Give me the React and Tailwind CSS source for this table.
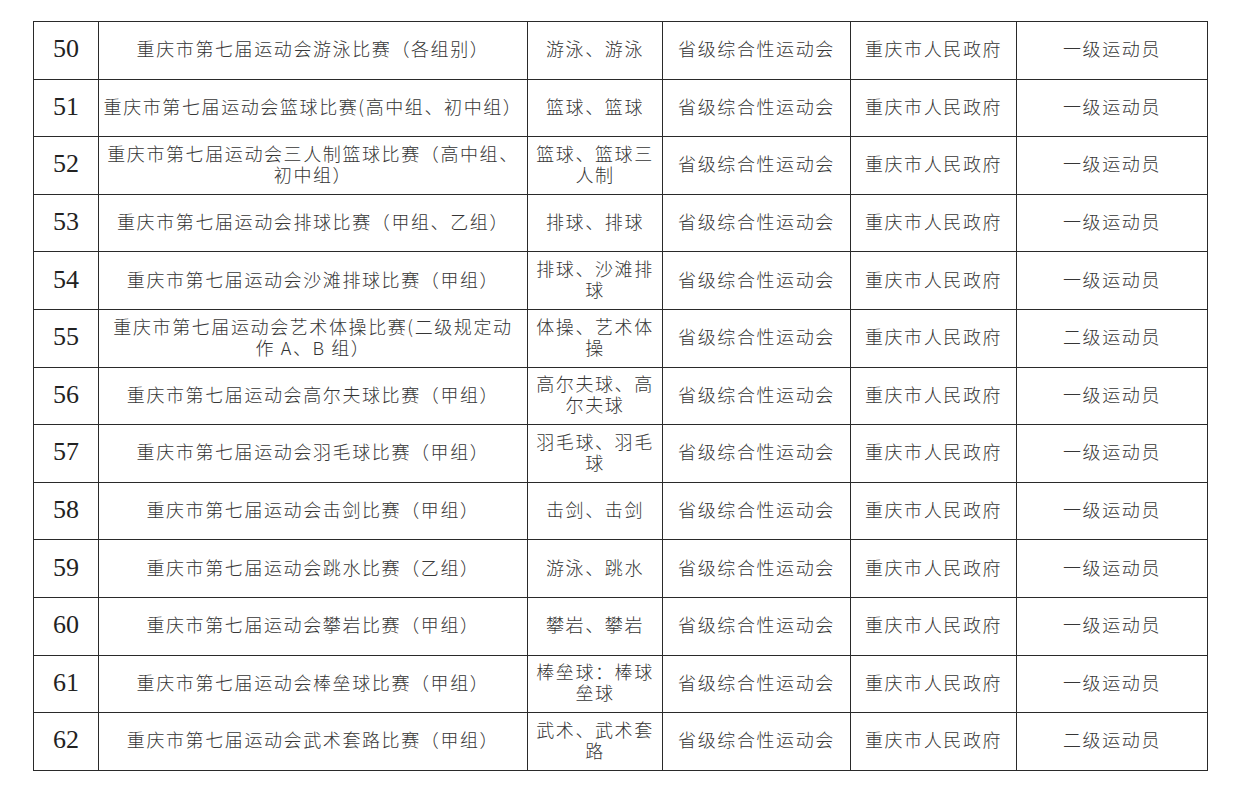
import React from "react";

const rows = [
  ["50", "重庆市第七届运动会游泳比赛（各组别）", "游泳、游泳", "一级运动员"],
  ["51", "重庆市第七届运动会篮球比赛(高中组、初中组）", "篮球、篮球", "一级运动员"],
  ["52", "重庆市第七届运动会三人制篮球比赛（高中组、\n初中组）", "篮球、篮球三\n人制", "一级运动员"],
  ["53", "重庆市第七届运动会排球比赛（甲组、乙组）", "排球、排球", "一级运动员"],
  ["54", "重庆市第七届运动会沙滩排球比赛（甲组）", "排球、沙滩排\n球", "一级运动员"],
  ["55", "重庆市第七届运动会艺术体操比赛(二级规定动\n作 A、B 组）", "体操、艺术体\n操", "二级运动员"],
  ["56", "重庆市第七届运动会高尔夫球比赛（甲组）", "高尔夫球、高\n尔夫球", "一级运动员"],
  ["57", "重庆市第七届运动会羽毛球比赛（甲组）", "羽毛球、羽毛\n球", "一级运动员"],
  ["58", "重庆市第七届运动会击剑比赛（甲组）", "击剑、击剑", "一级运动员"],
  ["59", "重庆市第七届运动会跳水比赛（乙组）", "游泳、跳水", "一级运动员"],
  ["60", "重庆市第七届运动会攀岩比赛（甲组）", "攀岩、攀岩", "一级运动员"],
  ["61", "重庆市第七届运动会棒垒球比赛（甲组）", "棒垒球：棒球\n垒球", "一级运动员"],
  ["62", "重庆市第七届运动会武术套路比赛（甲组）", "武术、武术套\n路", "二级运动员"],
];

const Lines = ({ text }) =>
  text.split("\n").map((t, i) => (
    <span key={i} className="block whitespace-nowrap">
      {t}
    </span>
  ));

const cell = "border border-[#2a2a2a] text-center align-middle px-0 pt-0 pb-[3px]";

export default function App() {
  return (
    <div className="min-h-[792px] w-[1233px] bg-white pt-[21px] pl-[33px]">
      <table
        className="table-fixed border-collapse text-[#363636] text-[18px] leading-[21px] tracking-[1.6px]"
        style={{ fontFamily: '"Noto Sans CJK SC", "Liberation Serif", serif', fontWeight: 300 }}
      >
        <colgroup>
          <col className="w-[65px]" />
          <col className="w-[429px]" />
          <col className="w-[135px]" />
          <col className="w-[188px]" />
          <col className="w-[166px]" />
          <col className="w-[191px]" />
        </colgroup>
        <tbody>
          {rows.map(([no, name, sport, level]) => (
            <tr key={no} className="h-[57.6px]">
              <td
                className={`${cell} text-[26px] text-[#222] tracking-normal`}
                style={{ fontFamily: '"Liberation Serif", serif', fontWeight: 400 }}
              >
                {no}
              </td>
              <td className={cell}>
                <Lines text={name} />
              </td>
              <td className={cell}>
                <Lines text={sport} />
              </td>
              <td className={cell}>省级综合性运动会</td>
              <td className={cell}>重庆市人民政府</td>
              <td className={cell}>{level}</td>
            </tr>
          ))}
        </tbody>
      </table>
    </div>
  );
}
